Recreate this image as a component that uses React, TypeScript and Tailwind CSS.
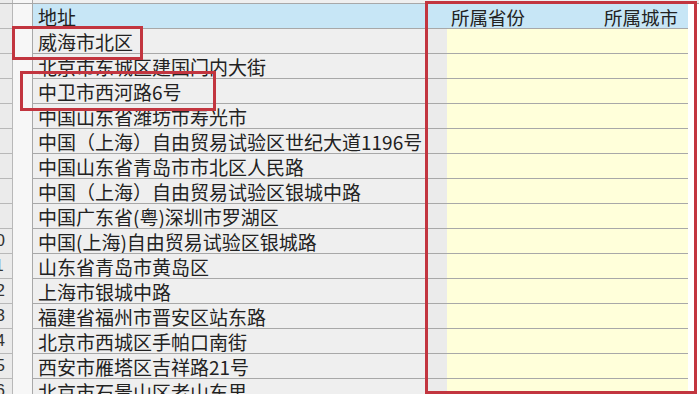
import React from "react";

const rows = [
  "威海市北区",
  "北京市东城区建国门内大街",
  "中卫市西河路6号",
  "中国山东省潍坊市寿光市",
  "中国（上海）自由贸易试验区世纪大道1196号",
  "中国山东省青岛市市北区人民路",
  "中国（上海）自由贸易试验区银城中路",
  "中国广东省(粤)深圳市罗湖区",
  "中国(上海)自由贸易试验区银城路",
  "山东省青岛市黄岛区",
  "上海市银城中路",
  "福建省福州市晋安区站东路",
  "北京市西城区手帕口南街",
  "西安市雁塔区吉祥路21号",
  "北京市石景山区老山东里",
];

const font = { fontFamily: '"Noto Sans CJK SC", "Noto Sans", sans-serif' };

function RowNum({ n }: { n: number }) {
  return (
    <div className="w-[13px] shrink-0 overflow-hidden bg-[#ebebeb] border-r border-[#b8b8b8] border-b border-b-[#b8b8b8]">
      <div className="ml-[-14px] w-[40px] text-left text-[17px] leading-[24px] text-[#333]" style={{ fontFamily: '"Liberation Sans", sans-serif' }}>
        {n}
      </div>
    </div>
  );
}

export default function App() {
  return (
    <div className="relative w-[699px] h-[394px] overflow-hidden bg-white" style={font}>
      <div className="flex flex-col">
        {/* top strip */}
        <div className="flex h-[4px] border-b border-[#a8a8a8]">
          <div className="w-[13px] bg-[#ebebeb] border-r border-[#b8b8b8]" />
          <div className="w-[20px] bg-[#f7f7f7] border-r border-[#a8a8a8]" />
          <div className="w-[392px] bg-[#efefef]" />
          <div className="flex-1 bg-[#efefef]" />
        </div>
        {/* header */}
        <div className="flex h-[25px]">
          <RowNum n={1} />
          <div className="w-[20px] shrink-0 bg-[#f7f7f7] border-r border-[#a8a8a8]" />
          <div className="w-[392px] shrink-0 bg-[#c7e6f6] border-b border-[#a8a8a8] pl-[5px] pt-[1px] text-[19px] leading-[24px] text-[#222]">
            地址
          </div>
          <div className="w-[263px] shrink-0 bg-[#c7e6f6] border-b border-[#a8a8a8] flex justify-between pl-[26px] pr-[10px] pt-[1px] text-[18.5px] leading-[24px] text-[#222]">
            <span>所属省份</span>
            <span>所属城市</span>
          </div>
          <div className="flex-1 bg-white" />
        </div>
        {rows.map((r, i) => (
          <div key={i} className="flex h-[25px]">
            <RowNum n={i + 2} />
            <div className="w-[20px] shrink-0 bg-[#f7f7f7] border-r border-[#a8a8a8]" />
            <div className="w-[392px] shrink-0 bg-[#efefef] border-b border-[#a8a8a8] pl-[5px] pt-[1px] text-[19px] leading-[24px] text-[#222] whitespace-nowrap overflow-hidden">
              {r}
            </div>
            <div className="w-[22px] shrink-0 bg-[#ebebeb] border-b border-[#a8a8a8]" />
            <div className="w-[241px] shrink-0 bg-[#ffffda] border-b border-[#a8a8a8]" />
            <div className="flex-1 bg-white" />
          </div>
        ))}
      </div>

      {/* red annotation boxes */}
      <div className="absolute left-[12px] top-[26px] w-[131px] h-[34px] border-[3px] border-[#c2353f]" />
      <div className="absolute left-[20px] top-[71px] w-[196px] h-[40px] border-[3px] border-[#c2353f]" />
      <div className="absolute left-[425px] top-[1px] w-[272px] h-[393px] border-[3px] border-[#c2353f]" />
    </div>
  );
}
